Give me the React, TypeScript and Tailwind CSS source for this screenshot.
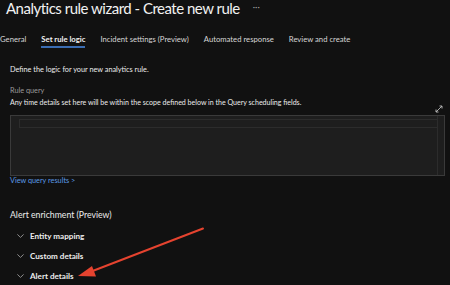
import React from "react";

const tabs = ["General", "Set rule logic", "Incident settings (Preview)", "Automated response", "Review and create"];
const items = ["Entity mapping", "Custom details", "Alert details"];

function Chevron() {
  return (
    <svg width="7" height="4" viewBox="0 0 7 4" className="shrink-0">
      <path d="M0.4 0.4 L3.5 3.4 L6.6 0.4" fill="none" stroke="#9a9a9a" strokeWidth="0.9" />
    </svg>
  );
}

export default function App() {
  return (
    <div
      className="relative w-[450px] h-[285px] overflow-hidden bg-[#111111] text-white"
      style={{ fontFamily: 'Lato, "Open Sans", sans-serif' }}
    >
      <div className="flex items-center pl-[6px] h-[17px]">
        <h1 className="text-[15px] leading-[17px] tracking-[-0.5px] whitespace-nowrap text-[#f2f2f2]">Analytics rule wizard - Create new rule</h1>
        <span className="ml-[13px] text-[9px] text-[#9a9a9a] leading-none -mt-[4px]">···</span>
      </div>

      <div className="flex gap-[15px] mt-[15px] text-[7.7px] leading-[14px] h-[14px] whitespace-nowrap">
        {tabs.map((t, i) => (
          <div key={t} className="relative">
            <span className={i === 1 ? "text-[#f2f2f2] font-bold" : "text-[#d6d6d6]"}>{t}</span>
            {i === 1 && <div className="absolute left-0 right-0 -bottom-[2px] h-[2px] bg-[#3b6db3]" />}
          </div>
        ))}
      </div>

      <div className="px-[10px] text-[7.3px] leading-[10px] whitespace-nowrap">
        <p className="mt-[19px] text-[#ececec]">Define the logic for your new analytics rule.</p>
        <p className="mt-[11px] text-[#9a9a9a]">Rule query</p>
        <div className="mt-[2px] flex items-start justify-between h-[10px]">
          <p className="text-[7.05px] text-[#ececec]">Any time details set here will be within the scope defined below in the Query scheduling fields.</p>
          <svg width="8" height="8" viewBox="0 0 8 8" className="relative top-[7px] -mr-[3px] shrink-0">
            <path d="M1 7 L7 1 M4.5 1 H7 V3.5 M1 4.5 V7 H3.5" fill="none" stroke="#bdbdbd" strokeWidth="0.9" />
          </svg>
        </div>
        <div className="mt-[7px] h-[61px] border border-[#3a3a3a] bg-[#1e1e1e] -mr-[5px] pt-[3px] pl-[8px] pr-[6px] flex">
          <div className="flex-1 h-[9px] border border-[#2c2c2c] border-r-0" />
          <div className="w-px bg-[#2c2c2c] -mt-[3px] h-[59px]" />
        </div>
        <p className="text-[#5b9be6]">View query results &gt;</p>

        <p className="mt-[23px] text-[8.7px] leading-[12px] text-[#ededed]">Alert enrichment (Preview)</p>
        <div className="mt-[8px] flex flex-col gap-[6px]">
          {items.map((t) => (
            <div key={t} className="flex items-center h-[14px] pl-[7px] gap-[6px]">
              <Chevron />
              <span className="text-[8.1px] font-bold text-[#ededed]">{t}</span>
            </div>
          ))}
        </div>
      </div>

      <svg className="absolute left-0 top-0 pointer-events-none" width="450" height="285" viewBox="0 0 450 285">
        <line x1="203" y1="228.5" x2="90" y2="272" stroke="#e5432f" strokeWidth="2" strokeLinecap="round" />
        <polygon points="78,276 92,266 96,276.5" fill="#e5432f" />
      </svg>
    </div>
  );
}
